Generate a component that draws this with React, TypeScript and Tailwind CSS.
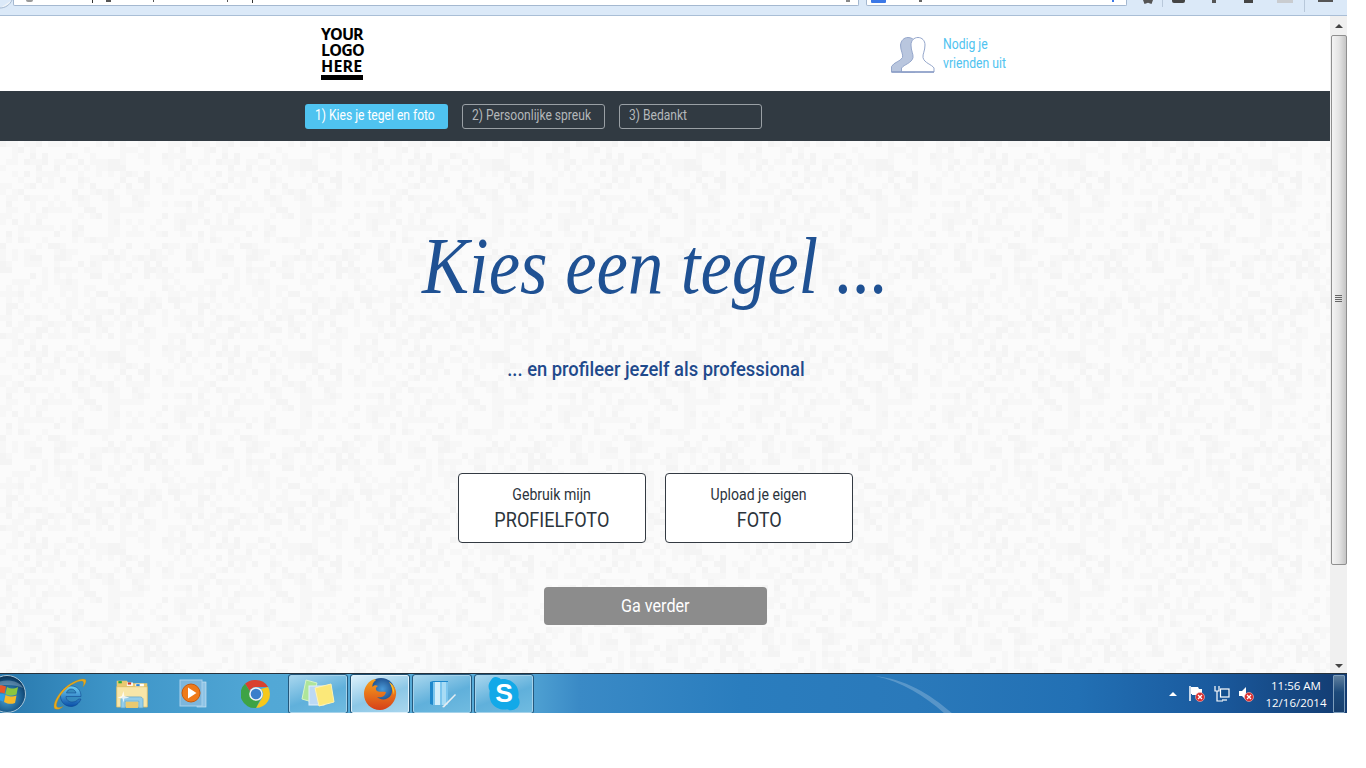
import { useMemo } from 'react';

const condensed = "font-['Roboto','Liberation_Sans',sans-serif]";

function PagePattern() {
  // pale woven texture of the page background
  const cells = useMemo(() => {
    const out: { x: number; y: number; o: number }[] = [];
    let seed = 1234;
    for (let y = 0; y < 32; y++) {
      for (let x = 0; x < 32; x++) {
        seed = (seed * 16807) % 2147483647;
        const r = seed / 2147483647;
        if (r < 0.45) out.push({ x: x * 6, y: y * 6, o: r < 0.15 ? 0.6 : 0.3 });
      }
    }
    return out;
  }, []);
  return (
    <svg className="absolute inset-0 w-full h-full" aria-hidden="true">
      <defs>
        <pattern id="weave" width="192" height="192" patternUnits="userSpaceOnUse">
          {cells.map((c, i) => (
            <rect key={i} x={c.x} y={c.y} width="6" height="6" fill="#f0f0f0" opacity={c.o} />
          ))}
        </pattern>
      </defs>
      <rect width="100%" height="100%" fill="url(#weave)" />
    </svg>
  );
}

function BrowserStrip() {
  return (
    <div className="h-[16px] bg-[#dbe9f8] border-b border-[#a9bed6] flex items-start overflow-hidden shrink-0">
      <svg width="13" height="10" viewBox="0 0 13 10" className="shrink-0" aria-hidden="true">
        <path d="M0 8C5 8 10 5 12 0" stroke="#a4b8d0" fill="#eef3f8" />
      </svg>
      <div className="relative w-[846px] h-[6px] bg-white border border-t-0 border-[#a4b8d0] rounded-b-[2px]">
        <span className="absolute left-[12px] top-0 w-[7px] h-[2px] bg-[#999] rounded-b-full" />
        <span className="absolute left-[78px] top-0 w-[1px] h-[3px] bg-[#333]" />
        <span className="absolute left-[92px] top-0 w-[5px] h-[2px] bg-[#555]" />
        <span className="absolute left-[139px] top-0 w-[1px] h-[2px] bg-[#555]" />
        <span className="absolute left-[213px] top-0 w-[1px] h-[2px] bg-[#555]" />
        <span className="absolute left-[238px] top-0 w-[1px] h-[3px] bg-[#333]" />
        <span className="absolute right-[8px] top-0 w-[4px] h-[2px] bg-[#888]" />
      </div>
      <div className="relative ml-[7px] w-[261px] h-[6px] bg-white border border-t-0 border-[#a4b8d0] rounded-b-[2px]">
        <span className="absolute left-[4px] top-0 w-[15px] h-[3px] bg-[#3b78e7] rounded-b-[1px]" />
        <span className="absolute left-[52px] top-0 w-[3px] h-[2px] bg-[#666]" />
        <span className="absolute right-[12px] top-0 w-[2px] h-[2px] bg-[#3b78e7]" />
      </div>
      <div className="ml-[16px] flex items-start h-[12px]">
        <span className="w-[10px] h-[4px] bg-[#555] [clip-path:polygon(0_0,100%_0,85%_100%,50%_70%,15%_100%)]" />
        <span className="ml-[9px] w-[1px] h-[7px] bg-[#b8c8da]" />
        <span className="ml-[9px] w-[13px] h-[3px] bg-[#444] rounded-b-[2px]" />
        <span className="ml-[27px] w-[4px] h-[3px] bg-[#555]" />
        <span className="ml-[28px] w-[9px] h-[3px] bg-[#444]" />
        <span className="ml-[24px] w-[16px] h-[3px] bg-[#c9ccd0]" />
        <span className="ml-[11px] w-[1px] h-[12px] bg-[#b8c8da]" />
        <span className="ml-[13px] w-[15px] h-[2px] bg-[#555]" />
      </div>
    </div>
  );
}

function FriendsIcon() {
  return (
    <svg width="44" height="36" viewBox="0 0 44 36" aria-hidden="true">
      <path d="M.5 35V29.500C3 25 9.500 24.500 11.500 20.500C12.500 17.500 9.500 14 9.500 8C10 3.500 13 .5 17 .5C20 .5 23 2 24.500 5L24 35Z" fill="#b9c6de" stroke="#94a6cb" />
      <path d="M10.500 35V31C13 27.500 21 26 22 20.500C22.500 17 20 14 20 8C20 3.500 23 .5 27 .5C31 .5 34 3.500 34 8C34 14 31.500 17 32 20.500C33 26 41 27.500 43 31V35Z" fill="#fff" stroke="#94a6cb" />
      <path d="M.5 35H43" stroke="#8a9dc6" strokeWidth="1.500" />
    </svg>
  );
}

function StepButton({ label, active }: { label: string; active?: boolean }) {
  return (
    <div
      className={
        active
          ? 'w-[143px] h-[25px] rounded-[3px] bg-[#4fc3f0] text-white pl-[10px] pb-[2px] flex items-center text-[15px]'
          : 'w-[143px] h-[25px] rounded-[3px] border border-[#9aa0a5] text-[#b4b8bb] pl-[9px] pb-[2px] flex items-center text-[15px]'
      }
    >
      <span className="inline-block origin-left scale-x-[0.805] whitespace-nowrap">{label}</span>
    </div>
  );
}

function ChoiceCard({ small, big }: { small: string; big: string }) {
  return (
    <div className="w-[188px] h-[70px] bg-white border border-[#333a42] rounded-[4px] flex flex-col items-center text-[#2c343c]">
      <span className="mt-[12px] text-[16px] leading-[18px] scale-x-[0.88] whitespace-nowrap">{small}</span>
      <span className="mt-[4px] text-[21px] leading-[24px] scale-x-[0.86] whitespace-nowrap">{big}</span>
    </div>
  );
}

function Scrollbar() {
  return (
    <div className="w-[17px] bg-[#f0f0f0] flex flex-col items-center shrink-0">
      <div className="h-[19px] flex items-center justify-center">
        <span className="border-x-[4px] border-x-transparent border-b-[4px] border-b-[#444]" />
      </div>
      <div className="w-[16px] h-[530px] pb-[4px] border border-[#8f8f8f] rounded-[2px] bg-[linear-gradient(90deg,#f4f4f4,#e4e4e4_50%,#c4c4c4)] flex flex-col items-center justify-center gap-[1px]">
        <span className="w-[7px] h-[1px] bg-[#666]" />
        <span className="w-[7px] h-[1px] bg-[#666]" />
        <span className="w-[7px] h-[1px] bg-[#666]" />
        <span className="w-[7px] h-[1px] bg-[#666]" />
      </div>
      <div className="flex-1 flex items-center justify-center pt-[93px]">
        <span className="border-x-[4px] border-x-transparent border-t-[4px] border-t-[#444]" />
      </div>
    </div>
  );
}

function StartOrb() {
  return (
    <svg width="40" height="39" viewBox="0 0 40 39" className="-ml-[13px] shrink-0" aria-hidden="true">
      <defs>
        <radialGradient id="orb" cx="50%" cy="60%" r="60%">
          <stop offset="0" stopColor="#4aa6dc" />
          <stop offset="0.75" stopColor="#14507f" />
          <stop offset="1" stopColor="#0d2f4d" />
        </radialGradient>
      </defs>
      <circle cx="20" cy="20" r="18.500" fill="url(#orb)" stroke="#a9c6d8" strokeWidth="1" />
      <path d="M8 12.500C12 10.500 15 11 19 12.500L17.500 19.500C14 18 11 18 6.500 19.500Z" fill="#e8572a" />
      <path d="M20 13C24 15 27 15 31 13L29.500 20.500C26 22 23 22 18.500 20Z" fill="#8cc63f" />
      <path d="M6.500 20.500C11 19 14 19 17.500 20.500L16 27.500C12 26 9 26 5 27.500Z" fill="#2f9ee8" />
      <path d="M18.500 21C23 23 26 23 29.500 21.500L28 29C24 30.500 21 30 17 28Z" fill="#f7b928" />
      <path d="M4 14C8 4 32 4 36 14C28 10 12 10 4 14Z" fill="#fff" opacity="0.25" />
    </svg>
  );
}

function IeIcon() {
  return (
    <svg width="34" height="34" viewBox="0 0 34 34" aria-hidden="true">
      <defs>
        <linearGradient id="ie" x1="0" y1="0" x2="0" y2="1">
          <stop offset="0" stopColor="#6fd0f5" />
          <stop offset="1" stopColor="#0a4fa8" />
        </linearGradient>
      </defs>
      <path d="M18 9C24 9 28 13 28 19.500H13C13 23 16 25 19 25C22 25 24 24 25.500 22H28C26 27 22 29.500 18 29.500C12 29.500 7.500 25 7.500 19C7.500 13.500 12 9 18 9ZM13.500 16H23C22.500 13.500 20.500 12 18 12C16 12 14 13.500 13.500 16Z" fill="url(#ie)" fillRule="evenodd" stroke="#0b3f88" strokeWidth="0.500" />
      <path d="M1.500 31.500C-1 27 6 15 14 9C21 4 29 .5 32.500 2.500C34 4 32 7.500 30 10C31 6.500 31 4.500 29 4C25 3.500 17 8 11 14C6 19.500 3 26 3.500 29C4 31 7 31 10 29.500C7 32.500 3 33 1.500 31.500Z" fill="#e8a91c" stroke="#b9850f" strokeWidth="0.300" />
    </svg>
  );
}

function FolderIcon() {
  return (
    <svg width="34" height="31" viewBox="0 0 40 36" aria-hidden="true">
      <path d="M2 3H14L16 6H38V34H2Z" fill="#e9c970" />
      <rect x="4" y="3.500" width="4" height="2.500" fill="#1fa83c" />
      <rect x="14" y="5" width="7" height="4" fill="#fff" />
      <rect x="15" y="5" width="4" height="2.500" fill="#cf3a25" />
      <rect x="24" y="6.500" width="10" height="4" fill="#fff" />
      <rect x="25" y="7" width="4" height="2.500" fill="#2d86d8" />
      <path d="M2 10H38V34H2Z" fill="#f8e6a8" stroke="#d8b860" strokeWidth="0.800" />
      <path d="M7 35V25C7 23 9 22 11 22H29C31 22 33 23 33 25V35H28V27H12V35Z" fill="#93cdea" stroke="#5ba3cc" strokeWidth="0.800" />
      <rect x="13" y="28" width="14" height="7" fill="#e9c970" />
      <path d="M8 21L10 15L11 21L17 23L11 24L10 29L9 24L3 23Z" fill="#fff" opacity="0.8" />
    </svg>
  );
}

function WmpIcon() {
  return (
    <svg width="30" height="30" viewBox="0 0 30 30" aria-hidden="true">
      <rect x="19" y="3" width="9" height="25" fill="#8fc4e6" stroke="#d8eaf6" strokeWidth="0.600" />
      <rect x="2" y="1" width="22" height="26" fill="#7db6dc" stroke="#a9d2ec" />
      <circle cx="13" cy="14" r="9" fill="#ef7a1a" stroke="#c85a0c" />
      <path d="M10 8.500L18.500 14L10 19.500Z" fill="#fff" />
    </svg>
  );
}

function ChromeIcon() {
  return (
    <svg width="30" height="30" viewBox="0 0 30 30" aria-hidden="true">
      <path d="M15 1A14 14 0 0 1 27.100 8H15A7 7 0 0 0 8.700 12L4 4.800A14 14 0 0 1 15 1Z" fill="#d9412f" />
      <path d="M27.100 8A14 14 0 0 1 15 29L21 19A7 7 0 0 0 20 10Z" fill="#f6c81c" />
      <path d="M4 4.800L9.300 13A7 7 0 0 0 19 20.700L15 29A14 14 0 0 1 4 4.800Z" fill="#3ea345" />
      <circle cx="15" cy="15" r="6.800" fill="#f2f4f6" />
      <circle cx="15" cy="15" r="5.300" fill="#3a7ecb" />
    </svg>
  );
}

function NotesIcon() {
  return (
    <svg width="34" height="30" viewBox="0 0 34 30" aria-hidden="true">
      <path d="M5 1L16 4L11 23L1 20Z" fill="#aee59a" stroke="#d6f3c8" />
      <rect x="8" y="7" width="15" height="19" fill="#bcd9f4" stroke="#e2f0fb" />
      <path d="M14 9L30 5L33 23L18 27Z" fill="#fbe879" stroke="#fdf3b5" />
    </svg>
  );
}

function FirefoxIcon() {
  return (
    <svg width="34" height="34" viewBox="0 0 34 34" aria-hidden="true">
      <defs>
        <radialGradient id="ffglobe" cx="55%" cy="40%" r="55%">
          <stop offset="0" stopColor="#4a9ad8" />
          <stop offset="1" stopColor="#123a78" />
        </radialGradient>
        <linearGradient id="fffox" x1="0" y1="0" x2="0" y2="1">
          <stop offset="0" stopColor="#f7a21c" />
          <stop offset="1" stopColor="#d6401a" />
        </linearGradient>
      </defs>
      <circle cx="18" cy="15" r="14" fill="url(#ffglobe)" />
      <path d="M9 3C11 2 12 2 13 3C10 5 9 8 9.500 10C11 8 13 8 15 9C13 10 12 12 14 14C16 15.500 20 14 23 15C22 20 17 21 14 20C18 24 25 23 28 18C30 14 29 8 26 5C31 8 34 13 33 18C32 26 25 33 17 33C8 33 1 26 1 17C1 11 4 6 9 3Z" fill="url(#fffox)" />
      <path d="M26 5C30 8 32 13 31 18C30 14 29 9 26 5Z" fill="#f8c62c" />
    </svg>
  );
}

function BookIcon() {
  return (
    <svg width="28" height="28" viewBox="0 0 28 28" className="ml-[2px]" aria-hidden="true">
      <path d="M1 2L4 1H19V25H4L1 24Z" fill="#1e88cc" />
      <path d="M4 2H19V25H4Z" fill="#7cc6ee" />
      <path d="M6 2H11V25H6Z" fill="#d2eefb" />
      <path d="M13 2H17V25H13Z" fill="#a8dcf5" />
      <path d="M13 27L26 14L27 15L15 27.500Z" fill="#e6edf2" />
    </svg>
  );
}

function SkypeIcon() {
  return (
    <svg width="34" height="36" viewBox="0 0 32 34" aria-hidden="true">
      <path d="M8 1C10 1 12 2 13 3C19 2 25 5 28 10C30 14 30 18 29.500 20C31 23 31.500 26 29 29.500C26 32.500 22 33 19 31.500C13 32.500 7 30 4 25C2 21 2 17 2.500 14C1 11 1 8 3 5C4.500 2.500 6 1 8 1Z" fill="#12a9e8" />
      <text x="16" y="25" textAnchor="middle" fontSize="25" fontWeight="700" fill="#fff" fontFamily="'Liberation Sans', sans-serif">S</text>
    </svg>
  );
}

function TaskButton({ active, children }: { active?: boolean; children: React.ReactNode }) {
  return (
    <div
      className={
        active
          ? 'w-[58px] h-[38px] rounded-[2px] border border-[#dff1fb] bg-[linear-gradient(160deg,#dcf0fa,#8cc7e6_55%,#a9d6ee)] outline outline-1 outline-[#1f4f70] flex items-center justify-center shrink-0'
          : 'w-[58px] h-[38px] rounded-[2px] border border-[#a5d2ea] bg-[linear-gradient(160deg,#a7d6ee,#60b0db_55%,#70bbe0)] outline outline-1 outline-[#24587c] flex items-center justify-center shrink-0'
      }
    >
      {children}
    </div>
  );
}

function RedX({ x, y }: { x: number; y: number }) {
  return (
    <g>
      <circle cx={x} cy={y} r="4.500" fill="#d92b2b" stroke="#f3c4c4" strokeWidth="0.600" />
      <path d={`M${x - 2} ${y - 2}l4 4m0 -4l-4 4`} stroke="#fff" strokeWidth="1.300" />
    </g>
  );
}

function Tray() {
  return (
    <div className="ml-auto flex items-center shrink-0">
      <span className="border-x-[4px] border-x-transparent border-b-[4px] border-b-white" />
      <svg width="16" height="18" viewBox="0 0 16 18" className="ml-[12px]" aria-hidden="true">
        <path d="M1 1V16" stroke="#fff" strokeWidth="1.500" />
        <path d="M2 2H9L10 4H13V10H3V9H2Z" fill="#fff" />
        <RedX x={11} y={12} />
      </svg>
      <svg width="16" height="18" viewBox="0 0 16 18" className="ml-[9px]" aria-hidden="true">
        <path d="M1 1V6H5V1M3 6V16H9" stroke="#fff" fill="none" strokeWidth="1.200" />
        <rect x="6.500" y="4" width="8.500" height="8" fill="#14508f" stroke="#fff" strokeWidth="1.200" />
        <path d="M8 15H13" stroke="#fff" strokeWidth="1.200" />
      </svg>
      <svg width="16" height="18" viewBox="0 0 16 18" className="ml-[8px]" aria-hidden="true">
        <path d="M1 6H4L8 2V15L4 11H1Z" fill="#fff" />
        <RedX x={11} y={12} />
      </svg>
      <div className="ml-[10px] w-[64px] flex flex-col items-center text-white text-[11.5px] leading-[17px] font-['Open_Sans',sans-serif] whitespace-nowrap">
        <span>11:56 AM</span>
        <span>12/16/2014</span>
      </div>
      <div className="ml-[5px] mr-[2px] w-[12px] h-[38px] rounded-[1px] border border-[#7d9dbb] bg-[linear-gradient(180deg,#5f7f9e,#1d4a7a_45%,#173e6d)]" />
    </div>
  );
}

function Taskbar() {
  return (
    <div className="relative h-[40px] border-t border-[#26323c] overflow-hidden flex items-center shrink-0 bg-[linear-gradient(90deg,#2878ad_0%,#3d94c7_8%,#52a8d6_20%,#58abd8_38%,#3a8ac6_43%,#2a7dbe_55%,#2a79ba_68%,#2270b4_80%,#1a5a9e_90%,#133b70_100%)]">
      <svg className="absolute left-[875px] top-0 h-[40px] w-[90px]" viewBox="0 0 90 40" aria-hidden="true">
        <path d="M0 2C30 5 55 20 78 40H70C50 22 28 8 0 2Z" fill="#fff" opacity="0.22" />
      </svg>
      <div className="relative flex items-center w-full">
        <StartOrb />
        <div className="w-[60px] ml-[13px] flex justify-center shrink-0"><IeIcon /></div>
        <div className="w-[61px] ml-[1px] flex justify-center shrink-0"><FolderIcon /></div>
        <div className="w-[61px] flex justify-center shrink-0"><WmpIcon /></div>
        <div className="w-[65px] flex justify-center shrink-0"><ChromeIcon /></div>
        <div className="flex gap-[4px] ml-[1px]">
          <TaskButton><NotesIcon /></TaskButton>
          <TaskButton active><FirefoxIcon /></TaskButton>
          <TaskButton><BookIcon /></TaskButton>
          <TaskButton><SkypeIcon /></TaskButton>
        </div>
        <Tray />
      </div>
    </div>
  );
}

export default function App() {
  return (
    <div className="w-[1366px] h-[768px] bg-white overflow-hidden">
      <div className="w-[1347px] flex flex-col">
        <BrowserStrip />
        <div className="flex h-[657px]">
          <div className={`w-[1330px] flex flex-col ${condensed}`}>
            <header className="h-[75px] bg-white shrink-0">
              <div className="w-[701px] ml-[305px] h-full flex items-start justify-between">
                <div className="ml-[16px] mt-[10px] w-[43px] flex flex-col">
                  <div className="font-['Open_Sans',sans-serif] font-bold text-black text-[16px] leading-[16px] whitespace-nowrap">
                    <div className="tracking-[-0.9px]">YOUR</div>
                    <div className="tracking-[-0.8px]">LOGO</div>
                    <div className="tracking-[0.2px]">HERE</div>
                  </div>
                  <div className="mt-[1px] h-[5px] w-[42px] bg-black" />
                </div>
                <div className="flex mt-[21px]">
                  <FriendsIcon />
                  <div className="ml-[8px] w-[63px] text-[14px] leading-[19px] text-[#4fc3f0] -mt-[2px]">
                    <div className="origin-left scale-x-[0.87] whitespace-nowrap">Nodig je</div>
                    <div className="origin-left scale-x-[0.87] whitespace-nowrap">vrienden uit</div>
                  </div>
                </div>
              </div>
            </header>
            <nav className="h-[50px] bg-[#313a42] shrink-0">
              <div className="w-[701px] ml-[305px] h-full flex items-center gap-[14px]">
                <StepButton label="1) Kies je tegel en foto" active />
                <StepButton label="2) Persoonlijke spreuk" />
                <StepButton label="3) Bedankt" />
              </div>
            </nav>
            <main className="relative flex-1 bg-[#fbfbfb] overflow-hidden">
              <PagePattern />
              <div className="relative w-[701px] ml-[305px] flex flex-col items-center">
                <h1 className="mt-[80px] font-['Liberation_Serif',serif] italic font-normal text-[80px] leading-[90px] text-[#1f5193] scale-x-[0.883] whitespace-nowrap">
                  Kies een tegel ...
                </h1>
                <p className="mt-[44px] text-[21px] leading-[28px] font-medium text-[#1f4a8c] scale-x-[0.875] whitespace-nowrap">
                  ... en profileer jezelf als professional
                </p>
                <div className="mt-[90px] flex gap-[19px]">
                  <ChoiceCard small="Gebruik mijn" big="PROFIELFOTO" />
                  <ChoiceCard small="Upload je eigen" big="FOTO" />
                </div>
                <button className="mt-[44px] w-[223px] h-[38px] bg-[#8c8c8c] rounded-[4px] text-white text-[19px]">
                  <span className="inline-block scale-x-[0.85]">Ga verder</span>
                </button>
              </div>
            </main>
          </div>
          <Scrollbar />
        </div>
        <Taskbar />
      </div>
    </div>
  );
}
